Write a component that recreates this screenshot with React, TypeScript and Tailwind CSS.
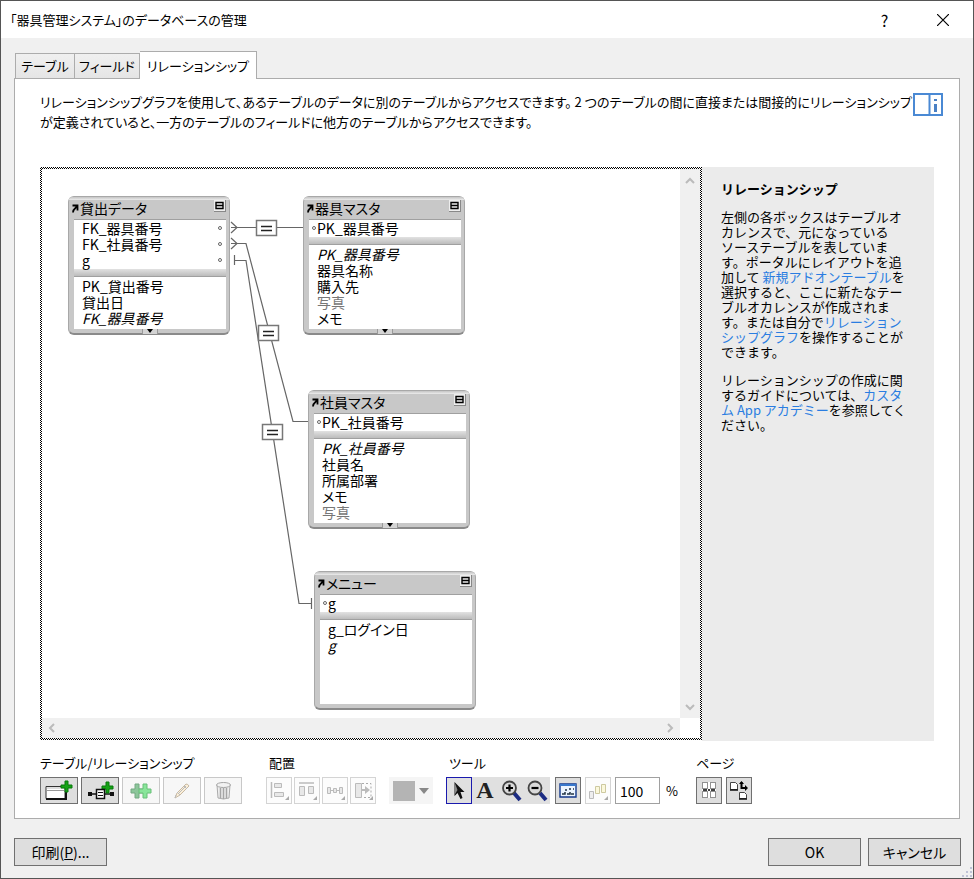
import type { ReactNode } from "react";

interface Field {
  name: string;
  italic?: boolean;
  muted?: boolean;
}

interface TableNode {
  title: string;
  left: number;
  top: number;
  dot: "left" | "right";
  keys: string[];
  fields: Field[];
  more: boolean;
}

const tables: TableNode[] = [
  {
    title: "貸出データ",
    left: 26,
    top: 27,
    dot: "right",
    keys: ["FK_器具番号", "FK_社員番号", "g"],
    fields: [{ name: "PK_貸出番号" }, { name: "貸出日" }, { name: "FK_器具番号", italic: true }],
    more: true,
  },
  {
    title: "器具マスタ",
    left: 261,
    top: 27,
    dot: "left",
    keys: ["PK_器具番号"],
    fields: [
      { name: "PK_器具番号", italic: true },
      { name: "器具名称" },
      { name: "購入先" },
      { name: "写真", muted: true },
      { name: "メモ" },
    ],
    more: true,
  },
  {
    title: "社員マスタ",
    left: 266,
    top: 221,
    dot: "left",
    keys: ["PK_社員番号"],
    fields: [
      { name: "PK_社員番号", italic: true },
      { name: "社員名" },
      { name: "所属部署" },
      { name: "メモ" },
      { name: "写真", muted: true },
    ],
    more: true,
  },
  {
    title: "メニュー",
    left: 272,
    top: 402,
    dot: "left",
    keys: ["g"],
    fields: [{ name: "g_ログイン日" }, { name: "g", italic: true }],
    more: false,
  },
];

// Centres of the "=" join boxes on the graph
const joins = [
  { x: 225, y: 59 },
  { x: 227, y: 164 },
  { x: 231, y: 263 },
];

function TableBox({ table }: { table: TableNode }) {
  return (
    <div
      className="absolute flex h-[139px] w-[162px] flex-col rounded-md border border-[#a8a8a8] border-b-2 border-b-[#8a8a8a] bg-[#c8c8c8] pr-[3px] pl-[5px] text-[14px] leading-4"
      style={{ left: table.left, top: table.top }}
    >
      <div className="-mr-[3px] -ml-[5px] h-[3px] shrink-0 rounded-t-md bg-gradient-to-b from-[#c4c4c4] to-[#ececec]" />
      <div className="flex h-[19px] shrink-0 items-start">
        <svg className="mt-[2px] -ml-[3px] h-3 w-2 shrink-0" viewBox="0 0 8 12">
          <path d="M1.500 3.500h5v5M6.500 3.500L4 6.500Q2 8 2 10.500" fill="none" stroke="#000" strokeWidth="1.800" />
        </svg>
        <span className="ml-px grow whitespace-nowrap">{table.title}</span>
        <svg className="h-3 w-3 shrink-0" viewBox="0 0 12 12">
          <path d="M0 0h12v12H0z" fill="#eee" />
          <path d="M12 0v12H0" fill="none" stroke="#888" strokeWidth="2" />
          <path d="M2 2.500h7v6H2zM2 5.500h7" fill="none" stroke="#000" strokeWidth="1.400" />
        </svg>
      </div>
      <ul className="z-10 border-t border-[#a0a0a0] bg-white pb-px">
        {table.keys.map((key) => (
          <li key={key} className={`flex items-center pr-1 ${table.dot === "left" ? "pl-[3px]" : "pl-2"}`}>
            {table.dot === "left" && <i className="mr-px h-1 w-1 rounded-full border border-[#666]" />}
            <span className="grow">{key}</span>
            {table.dot === "right" && <i className="h-1 w-1 rounded-full border border-[#666]" />}
          </li>
        ))}
      </ul>
      <div className="h-2 shrink-0 border-b border-[#a0a0a0] bg-gradient-to-b from-[#e2e2e2] to-[#bcbcbc]" />
      <ul className="grow bg-white pt-px pl-2">
        {table.fields.map((field) => (
          <li key={field.name} className={`${field.italic ? "italic" : ""} ${field.muted ? "text-[#777]" : ""}`}>
            {field.name}
          </li>
        ))}
      </ul>
      <div className="flex h-1 shrink-0 justify-center">
        {table.more && (
          <svg className="h-[5px] w-4" viewBox="0 0 16 5">
            <path d="M0 0h16v5H0z" fill="#d4d4d4" />
            <path d="M5 0h6L8 4z" fill="#000" />
            <path d="M.5 0v5M15.500 0v5" stroke="#999" />
          </svg>
        )}
      </div>
    </div>
  );
}

function Relations() {
  return (
    <svg className="absolute top-0 left-0 h-[548px] w-[638px]" viewBox="0 0 638 548" fill="none">
      <g stroke="#666" strokeWidth="1.200">
        <path d="M189 58.500h72M189 53l6 5.500l-6 5.500" />
        <path d="M189 74.500h15l47 178h15M189 69l6 5.500l-6 5.500" />
        <path d="M192 91.500h12l53 343h13M192.500 86v10M269.500 429v11" />
      </g>
      {joins.map((join) => (
        <g key={join.y}>
          <rect x={join.x - 10.5} y={join.y - 7.5} width="20" height="15" fill="#fff" stroke="#777" strokeWidth="1.500" />
          <path d={`M${join.x - 6} ${join.y - 1.5}h11M${join.x - 6} ${join.y + 2.5}h11`} stroke="#222" strokeWidth="1.400" />
        </g>
      ))}
    </svg>
  );
}

function Chevron({ d, label }: { d: string; label: string }) {
  return (
    <button aria-label={label} className="flex h-5 w-5 items-center justify-center">
      <svg className="h-[10px] w-[10px]" viewBox="0 0 10 10">
        <path d={d} fill="none" stroke="#bbb" strokeWidth="2" />
      </svg>
    </button>
  );
}

type ToolLook = "normal" | "disabled" | "faint" | "flat" | "active";

const toolLooks: Record<ToolLook, string> = {
  normal: "border-[#707070] bg-[#dedede]",
  disabled: "border-[#c8c8c8] bg-[#f7f7f7]",
  faint: "border-[#d4d4d4] bg-[#fcfcfc]",
  flat: "border-[#e0e0e0] bg-[#e0e0e0]",
  active: "border-[#1a1aae] bg-[#e0e0e0]",
};

function Tool({ label, look = "normal", wide, children }: { label: string; look?: ToolLook; wide?: boolean; children: ReactNode }) {
  return (
    <button
      aria-label={label}
      disabled={look === "disabled" || look === "faint"}
      className={`flex h-[27px] shrink-0 items-center justify-center border ${wide ? "w-[38px]" : "w-[26px]"} ${toolLooks[look]}`}
    >
      <svg className={wide ? "h-[25px] w-9" : "h-[25px] w-6"} viewBox={wide ? "0 0 36 25" : "0 0 24 25"} fill="none">
        {children}
      </svg>
    </button>
  );
}

function Group({ label, className, indent, children }: { label: string; className: string; indent?: boolean; children: ReactNode }) {
  return (
    <div role="group" aria-label={label} className={className}>
      <div className={`h-[22px] text-[13px] leading-4 whitespace-nowrap ${indent ? "pl-[3px]" : ""}`}>{label}</div>
      <div className="flex items-center">{children}</div>
    </div>
  );
}

function Toolbar() {
  return (
    <div className="mt-[14px] flex">
      <Group label="テーブル/リレーションシップ" className="w-[226px]">
        <div className="flex gap-[3px]">
          <Tool label="テーブルの追加" wide>
            <path d="M5 8.500h19v12H5z" fill="#fff" stroke="#333" />
            <path d="M6 10h17" stroke="#ddd" strokeWidth="2" />
            <path d="M6 12.500h17" stroke="#999" />
            <path d="M5 21h20V10" stroke="#111" strokeWidth="2" />
            <path d="M24 3h3v4h4v3h-4v4h-3v-4h-4V7h4z" fill="#15a315" stroke="#08780d" />
          </Tool>
          <Tool label="リレーションシップの追加" wide>
            <path d="M6 16h25" stroke="#111" strokeWidth="1.500" />
            <path d="M6 14h4v4H6zM28 14h4v4h-4z" fill="#111" />
            <path d="M24 4h3v4h4v3h-4v4h-3v-4h-4V8h4z" fill="#15a315" stroke="#08780d" />
            <path d="M14.500 11.500h8v9h-8z" fill="#fff" stroke="#111" strokeWidth="1.500" />
            <path d="M16 14.500h5M16 17.500h5" stroke="#111" />
          </Tool>
          <Tool label="複製" look="disabled" wide>
            <path d="M12 6h4v5h4v4h-4v5h-4v-5H8v-4h4z" fill="#8cc69a" stroke="#75a882" />
            <path d="M20 6h4v5h4v4h-4v5h-4v-5h-4v-4h4z" fill="#89e59a" stroke="#68bf79" />
          </Tool>
          <Tool label="編集" look="disabled" wide>
            <path d="M11 20l2-5 9-9q2 0 3 2l-9 9z" fill="#fbefd9" stroke="#c7b9a3" />
            <path d="M11 20l1-3M20 8l3 3M13 14l3 3M15 15l7-7" stroke="#bbb" />
          </Tool>
          <Tool label="削除" look="disabled" wide>
            <path d="M12 7h13l-1 13q-5.500 2-11 0z" fill="#eee" stroke="#aaa" />
            <ellipse cx="18.500" cy="7" rx="7" ry="2.500" fill="#f2f2f2" stroke="#a5a5a5" />
            <path d="M15.500 10v10M18.500 10v11M21.500 10v10" stroke="#a5a5a5" strokeWidth="1.500" />
          </Tool>
        </div>
      </Group>

      <Group label="配置" className="w-[180px]" indent>
        <div className="flex gap-[2px]">
          <Tool label="左揃え" look="faint">
            <path d="M4.500 4v16" stroke="#bbb" strokeWidth="1.500" />
            <path d="M7.500 5.500h7v4h-7zM7.500 14.500h9v4h-9z" fill="#e8e8e8" stroke="#bbb" />
            <path d="M22 18v4h-4z" fill="#aaa" />
          </Tool>
          <Tool label="上揃え" look="faint">
            <path d="M4 5h15" stroke="#bbb" strokeWidth="1.500" />
            <path d="M4.500 8.500h5v9h-5zM13.500 8.500h5v7h-5z" fill="#e8e8e8" stroke="#bbb" />
            <path d="M22 18v4h-4z" fill="#aaa" />
          </Tool>
          <Tool label="等間隔" look="faint">
            <path d="M4.500 9.500h3v6h-3zM10.500 10.500h3v4h-3zM16.500 9.500h3v6h-3z" fill="#e8e8e8" stroke="#bbb" />
            <path d="M7 12.500h4M13 12.500h4" stroke="#bbb" />
            <path d="M22 18v4h-4z" fill="#aaa" />
          </Tool>
          <Tool label="サイズ変更" look="faint">
            <path d="M4.500 5.500h6v14h-6z" fill="#e8e8e8" stroke="#bbb" />
            <path d="M11 5.500h9v14h-9" stroke="#aaa" strokeDasharray="2 2" />
            <path d="M11 11h3V8l5 4-5 4v-3h-3z" fill="#bbb" />
            <path d="M22 18v4h-4z" fill="#aaa" />
          </Tool>
        </div>
        <button aria-label="色" disabled className="ml-[13px] flex h-[27px] w-11 items-center gap-1 bg-[#f5f5f5] pl-1">
          <span className="h-5 w-[22px] bg-[#b4b4b4]" />
          <svg className="h-[6px] w-[10px]" viewBox="0 0 10 6">
            <path d="M0 0h10L5 6z" fill="#888" />
          </svg>
        </button>
      </Group>

      <Group label="ツール" className="w-[250px]" indent>
        <div className="flex">
          <Tool label="選択" look="active">
            <path d="M7.500 4v14l3-3 3 6 2-1-2-6h4z" fill="#111" />
            <path d="M7.500 4v13l3-5z" fill="#888" />
          </Tool>
          <button aria-label="テキスト" className="h-[27px] w-[26px] bg-[#e0e0e0] font-['Liberation_Serif',serif] text-[24px] leading-[27px] font-bold text-[#222]">
            A
          </button>
          <Tool label="拡大" look="flat">
            <path d="M15 15l6 7" stroke="#1b2b83" strokeWidth="4" />
            <circle cx="10.500" cy="10" r="6.500" fill="#d9d9d9" stroke="#444" strokeWidth="1.800" />
            <path d="M7 10h7M10.500 6.500v7" stroke="#000" strokeWidth="2.200" />
          </Tool>
          <Tool label="縮小" look="flat">
            <path d="M15 15l6 7" stroke="#1b2b83" strokeWidth="4" />
            <circle cx="10" cy="10" r="6.500" fill="#d9d9d9" stroke="#444" strokeWidth="1.800" />
            <path d="M6.500 10h7" stroke="#000" strokeWidth="2.200" />
          </Tool>
        </div>
        <div className="ml-[5px] flex gap-1">
          <Tool label="ウインドウに合わせる">
            <path d="M4 6h16v13H4z" fill="#edf5ff" stroke="#14398c" strokeWidth="1.400" />
            <path d="M4 7h16" stroke="#3978cc" strokeWidth="2" />
            <path d="M13 11h2M17 11h1M9 12h2M6 16h3v-2M11 16h3v-2M15 16h3" stroke="#234" strokeWidth="1.500" />
          </Tool>
          <Tool label="整列" look="faint">
            <path d="M3.500 13.500h4v7h-4z" fill="#eee" stroke="#bbb" />
            <path d="M9.500 8.500h4v7h-4zM15.500 6.500h4v8h-4z" fill="#fbf8dc" stroke="#cdc9a0" />
            <path d="M22 18v4h-4z" fill="#aaa" />
          </Tool>
          <input
            id="zoom"
            type="text"
            defaultValue="100"
            className="h-[27px] w-[45px] border border-[#a0a0a0] bg-white pl-1 text-[14px] outline-none"
          />
        </div>
        <label htmlFor="zoom" className="pl-[6px] text-[13px]">
          %
        </label>
      </Group>

      <Group label="ページ" className="shrink-0">
        <div className="flex gap-1">
          <Tool label="改ページを表示">
            <path d="M5 4h14v16H5z" fill="#fff" />
            <path d="M5.500 4.500h5v6h-5zM13.500 4.500h5v6h-5zM5.500 13.500h5v6h-5zM13.500 13.500h5v6h-5z" stroke="#222" strokeDasharray="1 1" />
            <path d="M6 12h4M11 12h2M14 12h4" stroke="#000" strokeWidth="1.500" />
          </Tool>
          <Tool label="ページ設定">
            <path d="M3.500 4.500h5l2 2v5h-7zM12.500 14.500h5l2 2v4h-7z" fill="#fff" stroke="#444" />
            <path d="M3 12h8M12 21h8" stroke="#111" strokeWidth="1.500" />
            <path d="M14.500 4v6h5" stroke="#000" strokeWidth="2" />
            <path d="M12 6l2.500-3L17 6zM18 7l3 3-3 3z" fill="#000" />
          </Tool>
        </div>
      </Group>
    </div>
  );
}

function HelpPanel() {
  return (
    <aside className="w-[232px] shrink-0 bg-[#ebebeb] pt-[14px] pl-[19px] text-[13px] leading-[15px] whitespace-nowrap [font-feature-settings:normal]">
      <h2 className="font-bold">リレーションシップ</h2>
      <p className="mt-[13px]">
        左側の各ボックスはテーブルオ
        <br />
        カレンスで、元になっている
        <br />
        ソーステーブルを表していま
        <br />
        す。ポータルにレイアウトを追
        <br />
        加して <a href="#addon" className="text-[#2a7de1]">新規アドオンテーブル</a>を
        <br />
        選択すると、ここに新たなテー
        <br />
        ブルオカレンスが作成されま
        <br />
        す。または自分で
        <a href="#graph" className="text-[#2a7de1]">
          リレーション
          <br />
          シップグラフ
        </a>
        を操作することが
        <br />
        できます。
      </p>
      <p className="mt-[13px]">
        リレーションシップの作成に関
        <br />
        するガイドについては、
        <a href="#academy" className="text-[#2a7de1]">
          カスタ
          <br />
          ム App アカデミー
        </a>
        を参照してく
        <br />
        ださい。
      </p>
    </aside>
  );
}

const dialogButton = "h-7 w-[93px] border border-[#707070] bg-[#dedede]";

export default function App() {
  return (
    <div className="relative flex min-h-screen flex-col border border-[#555] bg-[#f0f0f0] font-['Noto_Sans_CJK_JP','Noto_Sans',sans-serif] text-[13px] text-black [font-feature-settings:'palt']">
      <header className="flex h-[37px] items-center bg-white pl-[9px]">
        <h1 className="grow">「器具管理システム」のデータベースの管理</h1>
        <button aria-label="ヘルプ" className="h-full w-[57px] text-[16px]">
          ?
        </button>
        <button aria-label="閉じる" className="flex h-full w-[60px] items-center justify-center">
          <svg className="h-3 w-3" viewBox="0 0 12 12">
            <path d="M0 0l12 12M12 0L0 12" stroke="#000" strokeWidth="1.200" />
          </svg>
        </button>
      </header>

      <main className="flex grow flex-col px-[13px] pt-[13px]">
        <div role="tablist" className="z-10 -mb-px flex items-end pl-px">
          <button role="tab" aria-selected="false" className="h-[26px] w-[60px] border border-[#acacac] bg-gradient-to-b from-[#f0f0f0] to-[#e5e5e5]">
            テーブル
          </button>
          <button role="tab" aria-selected="false" className="h-[26px] w-[65px] border border-l-0 border-[#acacac] bg-gradient-to-b from-[#f0f0f0] to-[#e5e5e5]">
            フィールド
          </button>
          <button role="tab" aria-selected="true" className="h-7 w-[117px] border border-b-0 border-l-0 border-[#acacac] bg-white">
            リレーションシップ
          </button>
        </div>

        <section className="flex grow flex-col border border-[#acacac] bg-white pr-[25px] pb-[14px] pl-[25px]">
          <div className="-mr-[9px] flex h-[88px] items-start justify-between pt-[13px]">
            <p className="min-w-0 leading-5 whitespace-nowrap">
              リレーションシップグラフを使用して、あるテーブルのデータに別のテーブルからアクセスできます。 2 つのテーブルの間に直接または間接的にリレーションシップ
              <br />
              が定義されていると、一方のテーブルのフィールドに他方のテーブルからアクセスできます。
            </p>
            <button aria-label="情報パネル" className="shrink-0">
              <svg className="h-6 w-[30px]" viewBox="0 0 30 24">
                <path d="M1 2h28v21H1zM16.500 2v21" fill="none" stroke="#4a89d4" strokeWidth="2" />
                <path d="M22.500 7v2M22.500 12v8" stroke="#4a80c4" strokeWidth="3" />
              </svg>
            </button>
          </div>

          <div className="flex grow">
            <div className="mb-px flex min-w-0 grow bg-[conic-gradient(#000_25%,#fff_0_50%,#000_0_75%,#fff_0)] bg-[length:2px_2px] p-[2px]">
              <div className="flex grow flex-col bg-white">
                <div className="flex grow">
                  <div className="relative min-h-[548px] grow overflow-hidden">
                    <Relations />
                    {tables.map((table) => (
                      <TableBox key={table.title} table={table} />
                    ))}
                  </div>
                  <div className="flex w-5 flex-col justify-between bg-[#f0f0f0] pt-[2px] pb-px">
                    <Chevron label="上へ" d="M1 7l4-4 4 4" />
                    <Chevron label="下へ" d="M1 3l4 4 4-4" />
                  </div>
                </div>
                <div className="mr-5 flex justify-between bg-[#f0f0f0]">
                  <Chevron label="左へ" d="M7 1L3 5l4 4" />
                  <Chevron label="右へ" d="M3 1l4 4-4 4" />
                </div>
              </div>
            </div>
            <HelpPanel />
          </div>

          <Toolbar />
        </section>
      </main>

      <footer className="flex h-[59px] items-center px-[13px] pt-[7px] text-[14px]">
        <button className={dialogButton}>
          印刷(<u>P</u>)...
        </button>
        <div className="-mr-px ml-auto flex gap-[7px]">
          <button className={dialogButton}>OK</button>
          <button className={dialogButton}>キャンセル</button>
        </div>
      </footer>
      <svg className="absolute right-0 bottom-0 h-3 w-3" viewBox="0 0 12 12">
        <path d="M9 1h2v2H9zM5 5h2v2H5zM9 5h2v2H9zM1 9h2v2H1zM5 9h2v2H5zM9 9h2v2H9z" fill="#bfc3d6" />
      </svg>
    </div>
  );
}
